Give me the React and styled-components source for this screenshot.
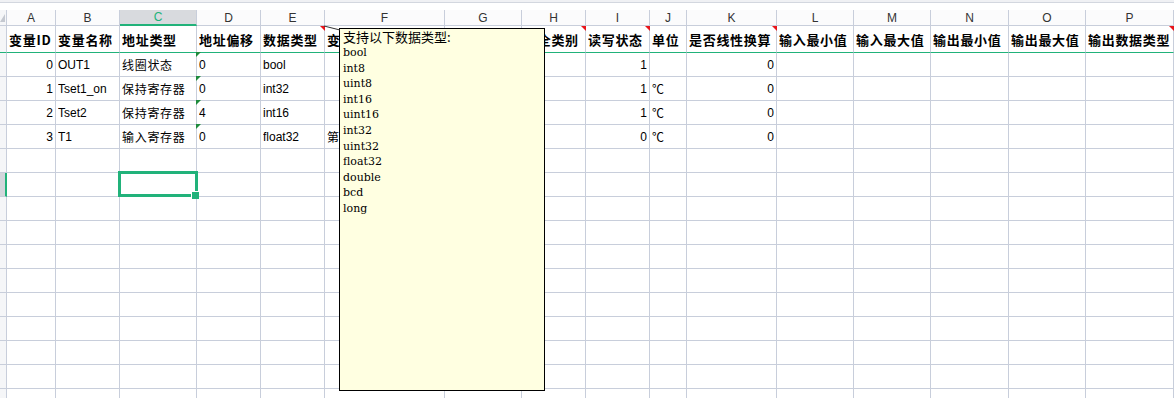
import React from 'react'
import styled, { createGlobalStyle, css } from 'styled-components'

const GRID = '#c8cedb'
const GREEN = '#21b27a'
// row head + columns A..O; column P takes what is left
const COLS = [7, 49, 64, 77, 64, 64, 120, 77, 64, 64, 37, 90, 77, 77, 78, 77]
const TEMPLATE = COLS.map(w => w + 'px').join(' ') + ' 1fr'
const LETTERS = 'ABCDEFGHIJKLMNOP'.split('')

const HEADERS = [
  { t: '变量ID' },
  { t: '变量名称' },
  { t: '地址类型' },
  { t: '地址偏移' },
  { t: '数据类型', comment: true },
  { t: '变量描述' },
  { t: '存储周期' },
  { t: '安全类别', comment: true },
  { t: '读写状态', comment: true },
  { t: '单位' },
  { t: '是否线性换算', comment: true },
  { t: '输入最小值' },
  { t: '输入最大值' },
  { t: '输出最小值' },
  { t: '输出最大值' },
  { t: '输出数据类型', comment: true },
]

const DATA = [
  ['0', 'OUT1', '线圈状态', '0', 'bool', '', '', '', '1', '', '0'],
  ['1', 'Tset1_on', '保持寄存器', '0', 'int32', '', '', '', '1', '℃', '0'],
  ['2', 'Tset2', '保持寄存器', '4', 'int16', '', '', '', '1', '℃', '0'],
  ['3', 'T1', '输入寄存器', '0', 'float32', '第一路温度', '', '', '0', '℃', '0'],
]

const RIGHT = [0, 8, 10]
const TOTAL_ROWS = 15
const ACTIVE_ROW = 5
const ACTIVE_COL = 2

const TYPES = ['bool', 'int8', 'uint8', 'int16', 'uint16', 'int32', 'uint32', 'float32', 'double', 'bcd', 'long']

const GlobalStyle = createGlobalStyle`
  html, body { margin: 0; padding: 0; background: #fff; overflow: hidden; }
  * { box-sizing: border-box; }
`

const Sheet = styled.div`
  position: relative;
  width: 1174px;
  height: 398px;
  overflow: hidden;
  background: #fff;
  font-family: "Liberation Sans", "Noto Sans CJK SC", sans-serif;
  color: #000;
`

const TopBar = styled.div`
  height: 10px;
  background: linear-gradient(#f0f1f4 0 2px, #d3d7df 2px 3px, #fff 3px);
`

const Row = styled.div`
  display: grid;
  grid-template-columns: ${TEMPLATE};
  height: ${p => p.$h}px;
`

const Corner = styled.div`
  position: relative;
  border-right: 1px solid ${GRID};
  border-bottom: 1px solid ${GRID};
  background: #f5f6f8;
  &::after {
    content: '';
    position: absolute;
    right: 1px;
    bottom: 3px;
    border-left: 5px solid transparent;
    border-bottom: 8px solid #c4c8d0;
  }
`

const ColHead = styled.div`
  display: flex;
  align-items: center;
  justify-content: center;
  border-right: 1px solid ${GRID};
  border-bottom: 1px solid ${GRID};
  background: #fbfbfc;
  color: #333;
  font-size: 12px;
  ${p => p.$selected && css`
    background: #d8dade;
    color: ${GREEN};
    border-bottom: 2px solid ${GREEN};
  `}
`

const RowHead = styled.div`
  border-right: 1px solid ${GRID};
  border-bottom: 1px solid ${GRID};
  background: #f5f6f8;
  ${p => p.$freeze && css`border-bottom-color: ${GREEN};`}
  ${p => p.$active && css`
    background: #d3d6dc;
    border-right: 2px solid ${GREEN};
  `}
`

const Cell = styled.div`
  position: relative;
  display: flex;
  align-items: center;
  justify-content: ${p => (p.$right ? 'flex-end' : 'flex-start')};
  min-width: 0;
  padding: 0 2px;
  border-right: 1px solid ${GRID};
  border-bottom: 1px solid ${p => (p.$freeze ? GREEN : GRID)};
  font-size: 12px;
  white-space: nowrap;
  ${p => p.$head && css`
    font-family: "Noto Sans CJK SC", sans-serif;
    font-weight: 700;
    font-size: 13px;
    letter-spacing: 0.6px;
  `}
  ${p => p.$comment && css`
    &::after {
      content: '';
      position: absolute;
      top: 0;
      right: -1px;
      border-left: 5px solid transparent;
      border-top: 5px solid #e8151b;
    }
  `}
  ${p => p.$flag && css`
    &::after {
      content: '';
      position: absolute;
      top: -1px;
      left: -1px;
      border-right: 5px solid transparent;
      border-top: 5px solid #1f8b3d;
    }
  `}
  ${p => p.$selected && css`
    &::before {
      content: '';
      position: absolute;
      top: -2px;
      left: -2px;
      right: -2px;
      bottom: -1px;
      border: 3px solid ${GREEN};
      z-index: 2;
    }
    &::after {
      content: '';
      position: absolute;
      right: -3px;
      bottom: -3px;
      width: 7px;
      height: 7px;
      background: ${GREEN};
      border-left: 1px solid #fff;
      border-top: 1px solid #fff;
      z-index: 3;
    }
  `}
`

const Text = styled.span`
  overflow: hidden;
  font-family: ${p => (p.$cjk ? '"Noto Sans CJK SC", sans-serif' : '"Liberation Sans", "Noto Sans CJK SC", sans-serif')};
  letter-spacing: ${p => (p.$cjk ? '0.7px' : '0')};
`

const Note = styled.div`
  position: absolute;
  left: 339px;
  top: 28px;
  width: 206px;
  height: 363px;
  border: 1px solid #000;
  background: #ffffe1;
  padding: 0 3px;
  z-index: 5;
`

const NoteTitle = styled.div`
  font-family: "Noto Sans CJK SC", sans-serif;
  font-size: 13px;
  line-height: 16px;
  color: #000;
`

const NoteItem = styled.div`
  font-family: "DejaVu Serif", serif;
  font-size: 11px;
  line-height: 15.6px;
  color: #000;
`

const Leader = styled.svg`
  position: absolute;
  left: 323px;
  top: 25px;
  z-index: 6;
`

const isCjk = s => /[\u4e00-\u9fff℃]/.test(s)

export default function App() {
  const blanks = Array.from({ length: TOTAL_ROWS - DATA.length }, () => Array(16).fill(''))
  const rows = [...DATA.map(r => [...r, ...Array(16 - r.length).fill('')]), ...blanks]

  return (
    <Sheet>
      <GlobalStyle />
      <TopBar />
      <Row $h={16}>
        <Corner />
        {LETTERS.map((l, i) => (
          <ColHead key={l} $selected={i === ACTIVE_COL}>{l}</ColHead>
        ))}
      </Row>
      <Row $h={27}>
        <RowHead $freeze />
        {HEADERS.map((h, i) => (
          <Cell key={i} $head $freeze $comment={h.comment}>
            <Text $cjk>{h.t}</Text>
          </Cell>
        ))}
      </Row>
      {rows.map((r, ri) => (
        <Row key={ri} $h={24}>
          <RowHead $active={ri === ACTIVE_ROW} />
          {r.map((v, ci) => (
            <Cell
              key={ci}
              $right={RIGHT.includes(ci)}
              $flag={ci === 3 && v !== ''}
              $selected={ri === ACTIVE_ROW && ci === ACTIVE_COL}
            >
              {v && <Text $cjk={isCjk(v)}>{v}</Text>}
            </Cell>
          ))}
        </Row>
      ))}

      <Leader width="18" height="8" viewBox="0 0 18 8">
        <line x1="1" y1="1" x2="17" y2="5" stroke="#333" strokeWidth="1" />
      </Leader>
      <Note>
        <NoteTitle>支持以下数据类型:</NoteTitle>
        {TYPES.map(t => (
          <NoteItem key={t}>{t}</NoteItem>
        ))}
      </Note>
    </Sheet>
  )
}
